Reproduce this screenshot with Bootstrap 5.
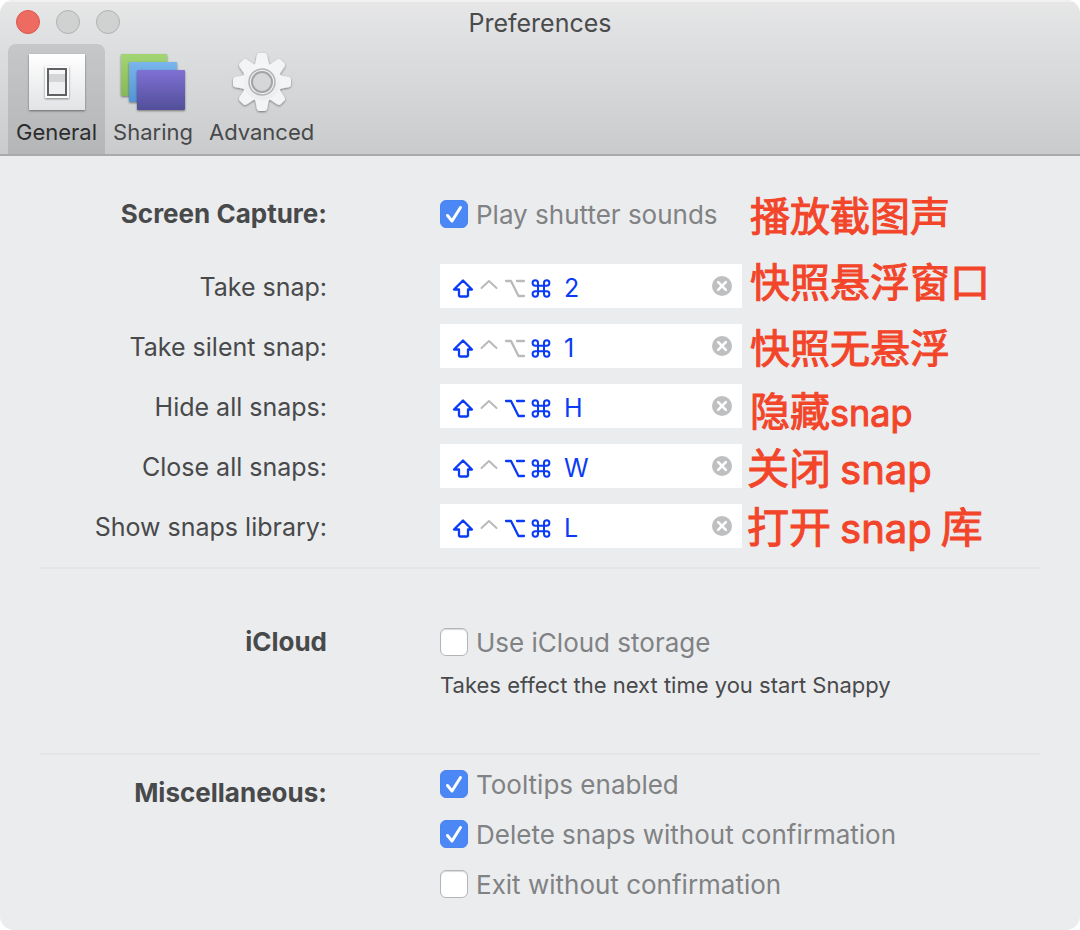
<!DOCTYPE html>
<html lang="en">
<head>
<meta charset="utf-8">
<meta name="viewport" content="width=device-width, initial-scale=1">
<title>Preferences</title>
<link rel="stylesheet" href="https://cdn.jsdelivr.net/npm/bootstrap@5.3.0/dist/css/bootstrap.min.css">
<style>
  body { font-family: Inter, "Noto Sans CJK SC", sans-serif; font-size: 25px; line-height: 32px; color: #48494b; background: #fff; }
  .prefs-window { background: #ebecee; border-radius: 14px; min-height: 100vh; overflow: hidden; }
  .titlebar { background: linear-gradient(#e7e7e8, #e0e1e2 20%, #cacbcc); border-bottom: 2px solid #a9aaab; box-shadow: inset 0 2px 0 #f1f1f2; }
  .titlebar h1 { font-size: 25px; line-height: 44px; font-weight: 400; color: #4a4b4c; padding-top: 1px; margin-bottom: -1px; }
  .lights { left: 16px; top: 10px; gap: 16px; }
  .light { width: 24px; height: 24px; border-radius: 50%; border: 1px solid #b1b2b3; background: #d0d1d1; padding: 0; }
  .light-close { background: #ed6b60; border-color: #d9574c; }
  .tab { height: 110px; border: 0; background: none; border-radius: 8px 8px 0 0; padding: 8px; font-size: 22px; line-height: 28px; color: #48494b; }
  .tab svg { display: block; width: 64px; height: 60px; margin: 0 auto 6px; overflow: visible; }
  .tab.active { background: linear-gradient(#c6c7c8, #b5b6b7); color: #2b2c2e; }
  .group { padding: 0 40px; }
  .group-capture { padding-top: 28px; }
  .group-cloud { padding-top: 56px; padding-bottom: 46px; }
  .pair { display: grid; grid-template-columns: 287px 1fr; column-gap: 113px; align-items: center; }
  .pair > :first-child { text-align: right; }
  .row-tall { min-height: 60px; }
  .row-first { margin-bottom: 12px; }
  .fields { width: 702px; }
  .fields label { padding-top: 2px; }
  .rule { height: 2px; margin: 0 40px; background: #e4e5e7; border: 0; opacity: 1; }
  strong { font-size: 26px; }
  .tick { display: flex; align-items: center; gap: 8px; font-size: 26px; color: #808284; white-space: nowrap; }
  .tick span { padding-top: 2px; }
  .tick .form-check-input { width: 28px; height: 28px; margin: 0; border: 1px solid #b4b5b7; border-radius: 6px; background-color: #fff; flex: none; box-shadow: inset 0 1px 1px #d8d9da; }
  .tick .form-check-input:checked { border-color: #4a84ee; background-color: #4b88f5; box-shadow: none; background-size: 26px 26px;
    background-image: url("data:image/svg+xml,%3csvg xmlns='http://www.w3.org/2000/svg' viewBox='0 0 26 26'%3e%3cpath d='M6.5 14.5 11 20 19.5 6.5' fill='none' stroke='%23fff' stroke-width='3' stroke-linecap='round' stroke-linejoin='round'/%3e%3c/svg%3e"); }
  .recorder { height: 44px; background: #fff; }
  .keys { border: 0; background: none; padding: 4px 0 0 10px; color: #0a3cf5; height: 44px; }
  .keys svg { width: 26px; height: 26px; fill: none; stroke: currentColor; stroke-width: 2; stroke-linecap: round; stroke-linejoin: round; }
  .keys .off { color: #b9babb; }
  .keys span { padding-left: 10px; }
  .clear { border: 0; background: none; padding: 0 10px 0 0; }
  .clear svg { display: block; width: 20px; height: 20px; }
  .notes { color: #f2452a; font-size: 40px; line-height: 66px; white-space: nowrap; padding-left: 8px; -webkit-text-stroke: 1px #f2452a; }
  .notes .compact { height: 59px; line-height: 59px; }
  .notes .larger { font-size: 42px; margin-left: -3px; line-height: 56px; }
  .notes span { font-size: 36px; line-height: 1; }
  .notes .larger span { font-size: 40px; padding: 0 9px; }
  .hint { font-size: 22px; line-height: 44px; }
  .stack .tick { min-height: 50px; }
  .misc-title { padding-top: 18px; }
</style>
</head>
<body>
<svg class="d-none">
  <symbol id="shift" viewBox="0 0 26 26"><path d="M13 5.500 22 14.500H18V20.500Q18 21.500 17 21.500H10Q9 21.500 9 20.500V14.500H4Z" stroke-width="2.300"/></symbol>
  <symbol id="ctrl" viewBox="0 0 26 26"><path d="M5.500 13 13 6 20.500 13"/></symbol>
  <symbol id="opt" viewBox="0 0 26 26"><path d="M4 6H9L16.500 21H22M15 6H22" stroke-width="2.300"/></symbol>
  <symbol id="cmd" viewBox="0 0 26 26"><path d="M10 10.500V8A2.700 2.700 0 1 0 7.300 10.700H18.700A2.700 2.700 0 1 0 16 8V19A2.700 2.700 0 1 0 18.700 16.300H7.300A2.700 2.700 0 1 0 10 19V10.500"/></symbol>
  <symbol id="cross" viewBox="0 0 20 20"><circle cx="10" cy="10" r="10" fill="#bebfc1"/><path d="M6.200 6.200 13.800 13.800M13.800 6.200 6.200 13.800" stroke="#fff" stroke-width="2.600" stroke-linecap="round"/></symbol>
</svg>
<div class="prefs-window">
  <header class="titlebar position-relative">
    <div class="lights position-absolute d-flex">
      <button class="light light-close" aria-label="Close"></button>
      <button class="light" aria-label="Minimize" disabled></button>
      <button class="light" aria-label="Zoom" disabled></button>
    </div>
    <h1 class="text-center mt-0">Preferences</h1>
    <nav class="d-flex px-2" aria-label="Panes">
      <button class="tab active">
        <svg viewBox="0 0 64 60">
          <defs>
            <linearGradient id="plate" x2="0" y2="1"><stop stop-color="#fff"/><stop offset="1" stop-color="#e2e3e5"/></linearGradient>
            <filter id="soft" x="-20%" y="-20%" width="140%" height="150%"><feDropShadow dx="0" dy="1" stdDeviation="1" flood-opacity=".45"/></filter>
          </defs>
          <path d="M4 2H60V58H4Z" fill="url(#plate)" filter="url(#soft)"/>
          <path d="M20 14H44V46H20Z" fill="#fafafa" filter="url(#soft)"/>
          <path d="M23 17H41V43H23Z" fill="#eff0f1" stroke="#606164" stroke-width="2"/>
          <path d="M24 18H40V22H24Z" fill="#f7f7f7"/><path d="M24 22H40V30H24Z" fill="#d4d5d7"/>
        </svg>General</button>
      <button class="tab">
        <svg viewBox="0 0 64 60">
          <defs>
            <linearGradient id="green" x2="0" y2="1"><stop stop-color="#a2d572"/><stop offset="1" stop-color="#87b85c"/></linearGradient>
            <linearGradient id="sky" x2="0" y2="1"><stop stop-color="#7ab5ec"/><stop offset="1" stop-color="#5294d5"/></linearGradient>
            <linearGradient id="violet" x2="0" y2="1"><stop stop-color="#7f70d5"/><stop offset="1" stop-color="#514f98"/></linearGradient>
          </defs>
          <rect y="2" width="46" height="42" rx="1" fill="url(#green)" filter="url(#soft)"/>
          <rect x="8" y="10" width="48" height="40" rx="1" fill="url(#sky)" filter="url(#soft)"/>
          <rect x="16" y="18" width="48" height="40" rx="1" fill="url(#violet)" filter="url(#soft)"/>
        </svg>Sharing</button>
      <button class="tab">
        <svg viewBox="0 0 64 60">
          <defs>
            <linearGradient id="steel" gradientUnits="userSpaceOnUse" x1="0" y1="-29" x2="0" y2="29"><stop stop-color="#f8f8f9"/><stop offset="1" stop-color="#e9eaec"/></linearGradient>
            <path id="tooth" d="M-8.500-15Q-6-19-5.500-25Q-5-29-2.500-29H2.500Q5-29 5.500-25Q6-19 8.500-15Z"/>
          </defs>
          <g transform="translate(32 30)">
            <g filter="url(#soft)" fill="#f3f4f5">
              <use href="#tooth"/><use href="#tooth" transform="rotate(45)"/><use href="#tooth" transform="rotate(90)"/><use href="#tooth" transform="rotate(135)"/>
              <use href="#tooth" transform="rotate(180)"/><use href="#tooth" transform="rotate(225)"/><use href="#tooth" transform="rotate(270)"/><use href="#tooth" transform="rotate(315)"/>
              <circle r="18.500" fill="url(#steel)"/>
            </g>
            <circle r="13" fill="#ededee" stroke="#b3b4b6" stroke-width="1.500"/>
            <circle r="10" fill="#d6d7d8" stroke="#a3a4a6" stroke-width="2"/>
          </g>
        </svg>Advanced</button>
    </nav>
  </header>

  <main>
    <section class="group group-capture d-flex">
      <div class="fields flex-shrink-0">
        <div class="pair row-tall row-first">
          <strong>Screen Capture:</strong>
          <label class="tick pt-0"><input class="form-check-input" type="checkbox" checked><span>Play shutter sounds</span></label>
        </div>
        <div class="pair row-tall"><label for="k1">Take snap:</label>
          <div class="recorder d-flex align-items-center justify-content-between">
            <button class="keys d-flex align-items-center" id="k1"><svg><use href="#shift"/></svg><svg class="off"><use href="#ctrl"/></svg><svg class="off"><use href="#opt"/></svg><svg><use href="#cmd"/></svg><span>2</span></button>
            <button class="clear" aria-label="Clear"><svg><use href="#cross"/></svg></button>
          </div></div>
        <div class="pair row-tall"><label for="k2">Take silent snap:</label>
          <div class="recorder d-flex align-items-center justify-content-between">
            <button class="keys d-flex align-items-center" id="k2"><svg><use href="#shift"/></svg><svg class="off"><use href="#ctrl"/></svg><svg class="off"><use href="#opt"/></svg><svg><use href="#cmd"/></svg><span>1</span></button>
            <button class="clear" aria-label="Clear"><svg><use href="#cross"/></svg></button>
          </div></div>
        <div class="pair row-tall"><label for="k3">Hide all snaps:</label>
          <div class="recorder d-flex align-items-center justify-content-between">
            <button class="keys d-flex align-items-center" id="k3"><svg><use href="#shift"/></svg><svg class="off"><use href="#ctrl"/></svg><svg><use href="#opt"/></svg><svg><use href="#cmd"/></svg><span>H</span></button>
            <button class="clear" aria-label="Clear"><svg><use href="#cross"/></svg></button>
          </div></div>
        <div class="pair row-tall"><label for="k4">Close all snaps:</label>
          <div class="recorder d-flex align-items-center justify-content-between">
            <button class="keys d-flex align-items-center" id="k4"><svg><use href="#shift"/></svg><svg class="off"><use href="#ctrl"/></svg><svg><use href="#opt"/></svg><svg><use href="#cmd"/></svg><span>W</span></button>
            <button class="clear" aria-label="Clear"><svg><use href="#cross"/></svg></button>
          </div></div>
        <div class="pair row-tall"><label for="k5">Show snaps library:</label>
          <div class="recorder d-flex align-items-center justify-content-between">
            <button class="keys d-flex align-items-center" id="k5"><svg><use href="#shift"/></svg><svg class="off"><use href="#ctrl"/></svg><svg><use href="#opt"/></svg><svg><use href="#cmd"/></svg><span>L</span></button>
            <button class="clear" aria-label="Clear"><svg><use href="#cross"/></svg></button>
          </div></div>
      </div>
      <div class="notes" lang="zh-CN">
        <div>播放截图声</div>
        <div>快照悬浮窗口</div>
        <div>快照无悬浮</div>
        <div class="compact">隐藏<span>snap</span></div>
        <div class="compact larger">关闭<span>snap</span></div>
        <div class="compact larger">打开<span>snap</span>库</div>
      </div>
    </section>
    <hr class="rule mt-2">

    <section class="group group-cloud">
      <div class="pair">
        <strong>iCloud</strong>
        <label class="tick"><input class="form-check-input" type="checkbox"><span>Use iCloud storage</span></label>
      </div>
      <div class="pair pt-1"><span></span><div class="hint">Takes effect the next time you start Snappy</div></div>
    </section>
    <hr class="rule">

    <section class="group pair align-items-start pt-1">
      <strong class="misc-title">Miscellaneous:</strong>
      <div class="stack">
        <label class="tick"><input class="form-check-input" type="checkbox" checked><span>Tooltips enabled</span></label>
        <label class="tick"><input class="form-check-input" type="checkbox" checked><span>Delete snaps without confirmation</span></label>
        <label class="tick"><input class="form-check-input" type="checkbox"><span>Exit without confirmation</span></label>
      </div>
    </section>
  </main>
</div>
<script src="https://cdn.jsdelivr.net/npm/bootstrap@5.3.0/dist/js/bootstrap.bundle.min.js"></script>
</body>
</html>
